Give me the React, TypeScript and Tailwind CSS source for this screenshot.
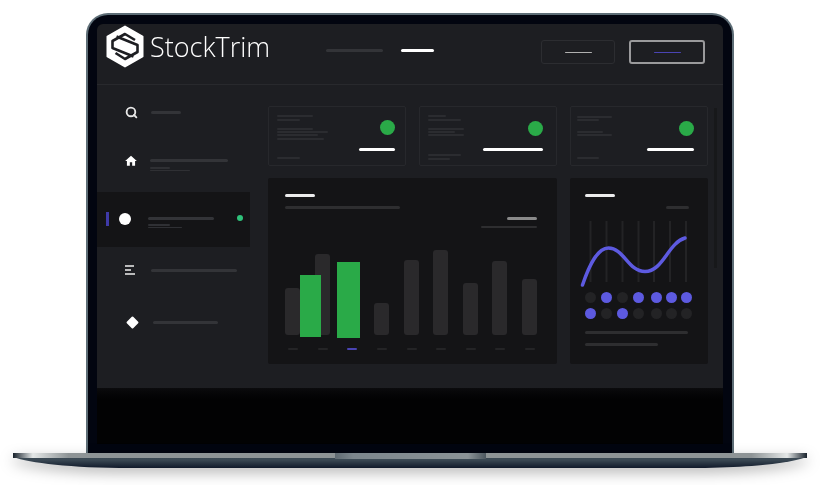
import { Search } from 'lucide-react'
import { MdHome } from 'react-icons/md'

function Line({ className = '' }: { className?: string }) {
  return <div className={`rounded-full ${className}`} />
}

const bars = ['h-[47px]', 'h-[81px]', 'h-0', 'h-[32px]', 'h-[75px]', 'h-[85px]', 'h-[52px]', 'h-[74px]', 'h-[56px]']
const dots = [
  [false, true, false, true, true, true, true],
  [true, false, true, false, false, false, false]
]

function Logo() {
  return (
    <svg width="38" height="43" viewBox="0 0 38 43" className="shrink-0">
      <path d="M19 1.5 36.5 11.5V31.5L19 41.5 1.5 31.5V11.5Z" fill="#fff" stroke="#fff" strokeWidth="2" strokeLinejoin="round" />
      <path
        d="M29 15 19 9 6.500 16V23L27.500 31.500M9.500 28 19 34 31.500 27V20L10.500 11.500"
        fill="none"
        stroke="#1d1e22"
        strokeWidth="2.6"
        strokeLinejoin="round"
      />
    </svg>
  )
}

function Base() {
  return (
    <svg width="820" height="32" viewBox="0 0 820 32" className="shrink-0 drop-shadow-[0_5px_7px_rgba(0,0,0,0.28)]">
      <defs>
        <linearGradient id="body" x1="0" y1="0" x2="0" y2="1">
          <stop offset="0" stopColor="#3a4752" />
          <stop offset="0.45" stopColor="#3b4954" />
          <stop offset="1" stopColor="#10192a" />
        </linearGradient>
        <linearGradient id="strip" x1="0" y1="0" x2="1" y2="0">
          <stop offset="0" stopColor="#18222c" />
          <stop offset="0.025" stopColor="#e4e7e7" />
          <stop offset="0.07" stopColor="#8e9496" />
          <stop offset="0.93" stopColor="#8e9496" />
          <stop offset="0.975" stopColor="#e4e7e7" />
          <stop offset="1" stopColor="#18222c" />
        </linearGradient>
        <linearGradient id="notch" x1="0" y1="0" x2="1" y2="0">
          <stop offset="0" stopColor="#5f6a72" />
          <stop offset="0.12" stopColor="#7c868d" />
          <stop offset="0.88" stopColor="#8b9397" />
          <stop offset="1" stopColor="#4d5860" />
        </linearGradient>
      </defs>
      <path d="M13 0H807V4C790 10 750 15 690 15H130C70 15 30 10 13 4Z" fill="url(#body)" />
      <rect x="13" y="0" width="794" height="5" fill="url(#strip)" />
      <rect x="335" y="0" width="151" height="6" fill="url(#notch)" />
    </svg>
  )
}

export default function App() {
  return (
    <div className="flex h-[485px] w-[820px] flex-col items-center overflow-hidden bg-white pt-[13px] font-['Open_Sans',sans-serif]">
      <div className="h-[440px] w-[648px] shrink-0 rounded-t-[22px] border-2 border-b-0 border-[#5d6d76] bg-[#020510] px-[9px] pt-[9px]">
        <div className="h-[420px] w-[626px] overflow-hidden rounded-t-[6px] bg-[#020203]">
          <div className="h-[364px] bg-[#1d1e22] blur-[0.35px]">
            <header className="flex h-[61px] items-start border-b border-[#28292d]">
              <div className="ml-[9px] mt-px flex items-center">
                <Logo />
                <span className="ml-[6px] text-[27px] font-light leading-[40px] text-white">StockTrim</span>
              </div>
              <Line className="ml-[56px] mt-[25px] h-[3px] w-[57px] bg-[#333438]" />
              <Line className="ml-[18px] mt-[25px] h-[3px] w-[33px] bg-white" />
              <button className="ml-[107px] mt-[16px] flex h-[24px] w-[74px] items-center justify-center rounded-[3px] border border-[#2c2d31]">
                <Line className="h-px w-[27px] bg-[#b0b0b0]" />
              </button>
              <button className="ml-[14px] mt-[16px] flex h-[24px] w-[76px] items-center justify-center rounded-[3px] border-2 border-[#9a9a9c]">
                <Line className="h-px w-[27px] bg-[#4a44b4]" />
              </button>
            </header>

            <div className="flex">
              <nav className="flex w-[153px] shrink-0 flex-col">
                <div className="mt-[20px] flex h-[14px] items-center pl-[28px]">
                  <Search size={13} strokeWidth={3.4} className="text-[#e8e8e8]" />
                  <Line className="ml-[13px] h-[3px] w-[30px] bg-[#333438]" />
                </div>
                <div className="mt-[36px] flex items-start pl-[27px]">
                  <MdHome size={14} className="mt-[-1px] text-white" />
                  <div className="ml-[12px] mt-[4px]">
                    <Line className="h-[3px] w-[78px] bg-[#333438]" />
                    <Line className="mt-[5px] h-[2px] w-[20px] bg-[#2f3034]" />
                    <Line className="mt-[1px] h-px w-[40px] bg-[#2f3034]" />
                  </div>
                </div>
                <div className="mt-[21px] flex h-[55px] items-start bg-[#141416]">
                  <Line className="ml-[9px] mt-[20px] h-[14px] w-[3px] rounded-none bg-[#3f3aa8]" />
                  <div className="ml-[10px] mt-[21px] size-[12px] rounded-full bg-white" />
                  <div className="ml-[17px] mt-[25px]">
                    <Line className="h-[3px] w-[66px] bg-[#333438]" />
                    <Line className="mt-[4px] h-[2px] w-[22px] bg-[#2f3034]" />
                    <Line className="mt-[1px] h-px w-[34px] bg-[#2f3034]" />
                  </div>
                  <div className="ml-[23px] mt-[23px] size-[6px] rounded-full bg-[#2fc27a]" />
                </div>
                <div className="mt-[17px] flex h-[12px] items-center pl-[28px]">
                  <svg width="10" height="10" viewBox="0 0 10 10" className="shrink-0">
                    <path d="M0 1H9M0 5H6M0 9H10" stroke="#eee" strokeWidth="1.7" />
                  </svg>
                  <Line className="ml-[16px] h-[3px] w-[86px] bg-[#333438]" />
                </div>
                <div className="mt-[40px] flex h-[12px] items-center pl-[31px]">
                  <div className="size-[9px] rotate-45 rounded-[1px] bg-white" />
                  <Line className="ml-[16px] h-[3px] w-[65px] bg-[#333438]" />
                </div>
              </nav>

              <main className="relative ml-[18px] mt-[21px] flex w-[440px] shrink-0 flex-col">
                <div className="flex gap-[13px]">
                  <div className="flex h-[60px] w-[138px] justify-between rounded-[2px] border border-[#27282c] pl-[8px] pr-[10px]">
                    <div>
                      <Line className="mt-[8px] h-[2px] w-[36px] bg-[#2b2c30]" />
                      <Line className="mt-[2px] h-[2px] w-[23px] bg-[#2b2c30]" />
                      <Line className="mt-[7px] h-[2px] w-[36px] bg-[#2b2c30]" />
                      <Line className="mt-px h-[2px] w-[51px] bg-[#2b2c30]" />
                      <Line className="mt-px h-[2px] w-[41px] bg-[#2b2c30]" />
                      <Line className="mt-[2px] h-[2px] w-[47px] bg-[#2b2c30]" />
                      <Line className="mt-[17px] h-[2px] w-[23px] bg-[#2b2c30]" />
                    </div>
                    <div className="flex flex-col items-end">
                      <div className="mt-[13px] size-[15px] rounded-full bg-[#2aaa48]" />
                      <Line className="mt-[13px] h-[3px] w-[36px] bg-white" />
                    </div>
                  </div>
                  <div className="flex h-[60px] w-[138px] justify-between rounded-[2px] border border-[#27282c] pl-[8px] pr-[13px]">
                    <div>
                      <Line className="mt-[8px] h-[2px] w-[18px] bg-[#2b2c30]" />
                      <Line className="mt-[2px] h-[2px] w-[33px] bg-[#2b2c30]" />
                      <Line className="mt-[7px] h-[2px] w-[36px] bg-[#2b2c30]" />
                      <Line className="mt-px h-[2px] w-[27px] bg-[#2b2c30]" />
                      <Line className="mt-px h-[2px] w-[36px] bg-[#2b2c30]" />
                      <Line className="mt-[18px] h-[2px] w-[33px] bg-[#2b2c30]" />
                      <Line className="mt-[2px] h-[2px] w-[22px] bg-[#2b2c30]" />
                    </div>
                    <div className="flex flex-col items-end">
                      <div className="mt-[14px] size-[15px] rounded-full bg-[#2aaa48]" />
                      <Line className="mt-[12px] h-[3px] w-[60px] bg-white" />
                    </div>
                  </div>
                  <div className="flex h-[60px] w-[138px] justify-between rounded-[2px] border border-[#27282c] pl-[6px] pr-[13px]">
                    <div>
                      <Line className="mt-[9px] h-[2px] w-[35px] bg-[#2b2c30]" />
                      <Line className="mt-[1px] h-[2px] w-[22px] bg-[#2b2c30]" />
                      <Line className="mt-[10px] h-[2px] w-[26px] bg-[#2b2c30]" />
                      <Line className="mt-px h-[2px] w-[35px] bg-[#2b2c30]" />
                      <Line className="mt-[21px] h-[2px] w-[22px] bg-[#2b2c30]" />
                    </div>
                    <div className="flex flex-col items-end">
                      <div className="mt-[14px] size-[15px] rounded-full bg-[#2aaa48]" />
                      <Line className="mt-[12px] h-[3px] w-[47px] bg-white" />
                    </div>
                  </div>
                </div>

                <div className="mt-[12px] flex gap-[13px]">
                  <section className="flex h-[186px] w-[289px] flex-col rounded-[2px] bg-[#141416] px-[17px] pt-[16px]">
                    <Line className="h-[3px] w-[30px] bg-[#ececec]" />
                    <Line className="mt-[9px] h-[3px] w-[115px] bg-[#2e2e30]" />
                    <div className="flex flex-col items-end pr-[3px]">
                      <Line className="mt-[8px] h-[3px] w-[30px] bg-[#8a8a8a]" />
                      <Line className="mt-[6px] h-[2px] w-[56px] bg-[#2e2e30]" />
                    </div>
                    <div className="relative mt-[22px] flex h-[85px] items-end justify-between pr-[3px]">
                      {bars.map((h, i) => (
                        <div key={i} className={`w-[15px] rounded-[3px] bg-[#2a292b] ${h}`} />
                      ))}
                      <div className="absolute left-[15px] top-[25px] h-[62px] w-[21px] bg-[#2aaa48]" />
                      <div className="absolute left-[52px] top-[12px] h-[76px] w-[23px] bg-[#2aaa48]" />
                    </div>
                    <div className="mt-[13px] flex justify-between pl-[3px] pr-[5px]">
                      {bars.map((_, i) => (
                        <Line key={i} className={`h-[2px] w-[10px] ${i === 2 ? 'bg-[#4a44b4]' : 'bg-[#242426]'}`} />
                      ))}
                    </div>
                  </section>

                  <section className="flex h-[186px] w-[138px] flex-col rounded-[2px] bg-[#141416] px-[15px] pt-[16px]">
                    <Line className="h-[3px] w-[30px] bg-[#ececec]" />
                    <div className="flex justify-end pr-[4px]">
                      <Line className="mt-[9px] h-[3px] w-[23px] bg-[#2e2e30]" />
                    </div>
                    <svg width="136" height="70" viewBox="0 0 136 70" className="-ml-[14px] mt-[10px] shrink-0">
                      {[19.5, 35.5, 51.5, 67.5, 83, 99, 115].map(x => (
                        <line key={x} x1={x} x2={x} y1="2" y2="63" stroke="#232325" strokeWidth="2" />
                      ))}
                      <path
                        d="M11.500 66C19 44 27 29 37.500 29C53 29 57 52.500 74 52.500C92 52.500 97 24 114 19"
                        fill="none"
                        stroke="#5d5ae0"
                        strokeWidth="3.5"
                        strokeLinecap="round"
                      />
                    </svg>
                    {dots.map((row, r) => (
                      <div key={r} className={`flex ${r === 0 ? 'mt-[3px]' : 'mt-[5px]'}`}>
                        {row.map((on, i) => (
                          <div
                            key={i}
                            className={`size-[11px] shrink-0 rounded-full ${on ? 'bg-[#5d5ae0]' : 'bg-[#232325]'} ${
                              i === 0 ? '' : i === 4 ? 'ml-[7px]' : i > 4 ? 'ml-[4px]' : 'ml-[5px]'
                            }`}
                          />
                        ))}
                      </div>
                    ))}
                    <Line className="mt-[12px] h-[3px] w-[103px] bg-[#2e2e30]" />
                    <Line className="mt-[9px] h-[3px] w-[73px] bg-[#2e2e30]" />
                  </section>
                </div>
                <div className="absolute left-[446px] top-[2px] h-[160px] w-[3px] bg-[#17181a]" />
              </main>
            </div>
          </div>
          <div className="h-[12px] bg-linear-to-b from-[#0b0b0d] to-[#020203]" />
        </div>
      </div>
      <Base />
    </div>
  )
}
